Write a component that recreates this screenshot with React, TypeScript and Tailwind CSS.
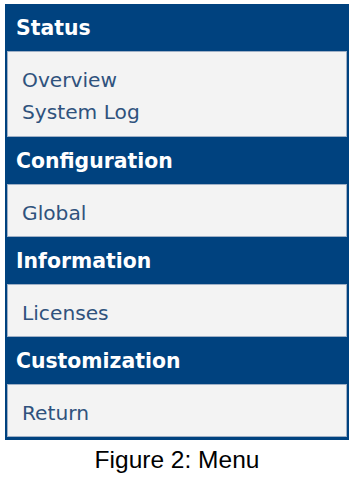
export default function App() {
  const sections: { title: string; items: string[] }[] = [
    { title: "Status", items: ["Overview", "System Log"] },
    { title: "Configuration", items: ["Global"] },
    { title: "Information", items: ["Licenses"] },
    { title: "Customization", items: ["Return"] },
  ];
  return (
    <div className="w-[354px] h-[482px] bg-white pt-[4px]">
      <div className="ml-[5px] w-[344px] bg-[#00427f] px-[2px] pb-[3px]">
        {sections.map((s) => (
          <div key={s.title}>
            <div
              className="h-[47px] pt-[13px] pl-[9px] text-white font-bold text-[20.4px] leading-[23px]"
              style={{ fontFamily: '"DejaVu Sans", sans-serif' }}
            >
              {s.title}
            </div>
            <div
              className={`bg-[#f3f3f3] border border-[#9fb0c6] pl-[14px] pt-[12px] ${
                s.items.length > 1 ? "pb-[8px]" : "pb-[7px]"
              }`}
            >
              {s.items.map((it) => (
                <div
                  key={it}
                  className="text-[20.2px] leading-[32px] text-[#2f527d]"
                  style={{ fontFamily: '"DejaVu Sans", sans-serif' }}
                >
                  {it}
                </div>
              ))}
            </div>
          </div>
        ))}
      </div>
      <div
        className="mt-[6px] w-[354px] text-center text-black text-[24.5px] leading-[28px]"
        style={{ fontFamily: '"Liberation Sans", Arial, sans-serif' }}
      >
        Figure 2: Menu
      </div>
    </div>
  );
}
